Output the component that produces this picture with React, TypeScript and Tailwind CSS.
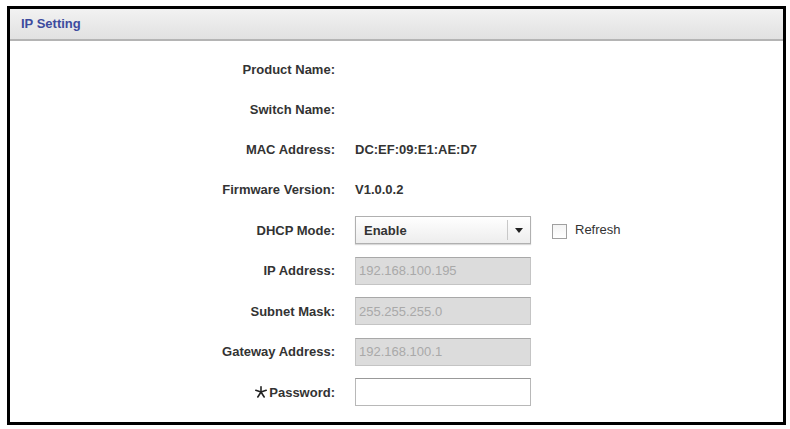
import React from "react";

const font = { fontFamily: '"Liberation Sans", Arial, sans-serif' };

function Label({ children }: { children: React.ReactNode }) {
  return (
    <div className="flex w-[325px] shrink-0 items-center justify-end text-right text-[13px] font-bold text-[#333]">
      {children}
    </div>
  );
}

function DisabledInput({ value }: { value: string }) {
  return (
    <div className="flex h-[28px] w-[176px] items-center border border-[#c4c4c4] border-t-[#a8a8a8] bg-[#dcdcdc] pl-[3px] text-[13px] text-[#a9a9a9]">
      {value}
    </div>
  );
}

export default function App() {
  return (
    <div className="h-[429px] w-[790px] bg-white pl-[7px] pt-[6px]" style={font}>
      <div className="flex h-[419px] w-[779px] flex-col border-[3px] border-black bg-white">
        <div className="flex h-[32px] shrink-0 items-center border-b-2 border-[#b4b4b4] bg-gradient-to-b from-[#f2f2f2] to-[#e1e1e1] pb-[1px] pl-[11px] text-[13px] font-bold text-[#3d4b9e]">
          IP Setting
        </div>
        <div className="flex flex-col pt-[9px]">
          {[
            ["Product Name:", ""],
            ["Switch Name:", ""],
            ["MAC Address:", "DC:EF:09:E1:AE:D7"],
            ["Firmware Version:", "V1.0.0.2"],
          ].map(([l, v]) => (
            <div key={l} className="flex h-[40px] items-center gap-[20px]">
              <Label>{l}</Label>
              <div className="text-[13px] font-bold text-[#333]">{v}</div>
            </div>
          ))}
          <div className="flex h-[40.5px] items-center gap-[20px]">
            <Label>DHCP Mode:</Label>
            <div className="flex h-[28px] w-[176px] items-center border border-[#b0b0b0] bg-gradient-to-b from-white to-[#ededed] shadow-[0_1px_1px_rgba(0,0,0,0.15)]">
              <div className="flex-1 pl-[8px] text-[13px] font-bold text-[#333]">Enable</div>
              <div className="h-[20px] w-px bg-[#c8c8c8]" />
              <div className="flex w-[22px] items-center justify-center">
                <svg width="8" height="5" viewBox="0 0 8 5">
                  <path d="M0 0 L8 0 L4 5 Z" fill="#222" />
                </svg>
              </div>
            </div>
            <div className="ml-[1px] flex items-center gap-[8px] self-start pt-[13px]">
              <div className="h-[15px] w-[15px] border border-[#a0a0a0] bg-gradient-to-b from-[#f4f4f4] to-white" />
              <span className="-mt-[3px] text-[13px] text-[#333]">Refresh</span>
            </div>
          </div>
          <div className="flex h-[40.5px] items-center gap-[20px]">
            <Label>IP Address:</Label>
            <DisabledInput value="192.168.100.195" />
          </div>
          <div className="flex h-[40.5px] items-center gap-[20px]">
            <Label>Subnet Mask:</Label>
            <DisabledInput value="255.255.255.0" />
          </div>
          <div className="flex h-[40.5px] items-center gap-[20px]">
            <Label>Gateway Address:</Label>
            <DisabledInput value="192.168.100.1" />
          </div>
          <div className="flex h-[40.5px] items-center gap-[20px]">
            <Label>
              <svg width="12" height="12" viewBox="0 0 12 12" className="mr-[2px]">
                <g stroke="#222" strokeWidth="1.6" strokeLinecap="round">
                  <line x1="6" y1="6" x2="6" y2="0.8" />
                  <line x1="6" y1="6" x2="0.8" y2="4.3" />
                  <line x1="6" y1="6" x2="11.2" y2="4.3" />
                  <line x1="6" y1="6" x2="2.8" y2="11" />
                  <line x1="6" y1="6" x2="9.2" y2="11" />
                </g>
              </svg>
              Password:
            </Label>
            <div className="h-[28px] w-[176px] border border-[#b8b8b8] border-t-[#999] bg-white" />
          </div>
        </div>
      </div>
    </div>
  );
}
